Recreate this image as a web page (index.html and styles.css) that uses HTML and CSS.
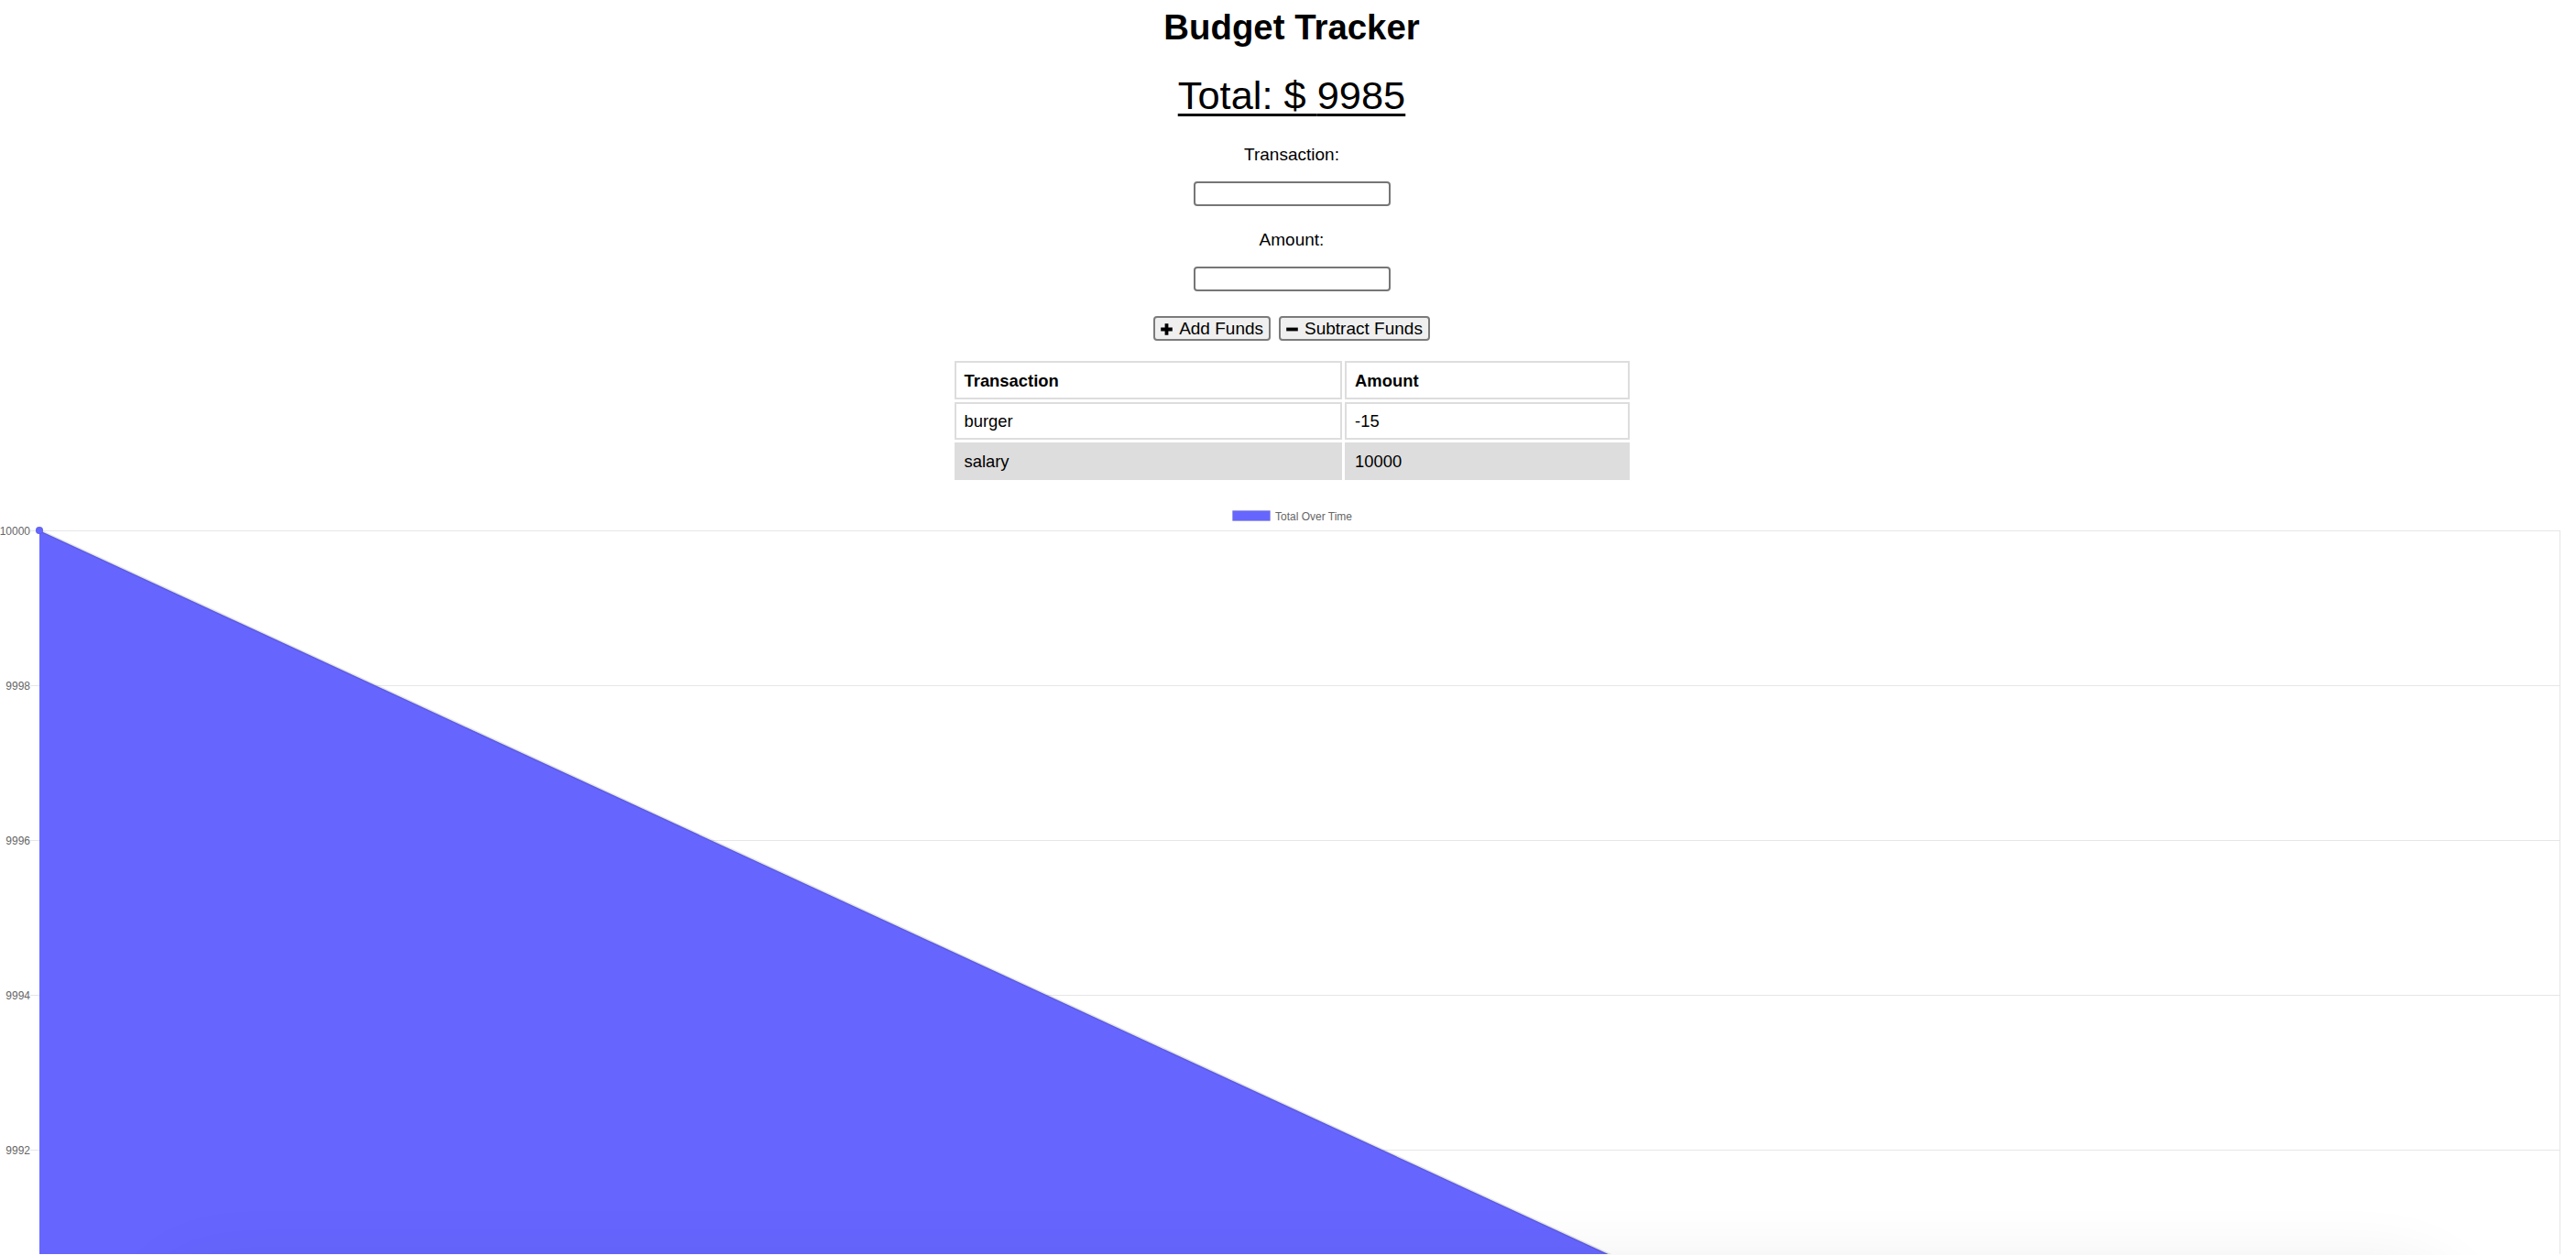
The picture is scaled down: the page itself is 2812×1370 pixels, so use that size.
FILE: index.html
```html
<!DOCTYPE html>
<html lang="en">
<head>
<meta charset="utf-8">
<title>Budget Tracker</title>
<link rel="stylesheet" href="styles.css">
</head>
<body>
<main class="page">
  <div class="top">
    <h1 class="title">Budget Tracker</h1>
    <h2 class="total">Total: $ <span class="total-value">9985</span></h2>
    <label class="label label-first" for="t-name">Transaction:</label>
    <input class="field" id="t-name" type="text">
    <label class="label label-second" for="t-amount">Amount:</label>
    <input class="field" id="t-amount" type="number">
    <div class="actions">
      <button class="btn" type="button"><svg class="ico" viewBox="0 0 13 13" aria-hidden="true"><path d="M4.6 0.2h3.8v4.4h4.4v3.8H8.4v4.4H4.6V8.4H0.2V4.6h4.4z"/></svg><span>Add Funds</span></button>
      <button class="btn" type="button"><svg class="ico" viewBox="0 0 13 13" aria-hidden="true"><path d="M0.2 4.6h12.6v3.8H0.2z"/></svg><span>Subtract Funds</span></button>
    </div>
    <table class="ledger">
      <colgroup><col class="col-a"><col class="col-b"></colgroup>
      <thead>
        <tr><th>Transaction</th><th>Amount</th></tr>
      </thead>
      <tbody>
        <tr><td>burger</td><td>-15</td></tr>
        <tr class="alt"><td>salary</td><td>10000</td></tr>
      </tbody>
    </table>
  </div>
  <svg class="chart" viewBox="0 0 2812 830" width="2812" height="830">
    <rect x="1345.5" y="18.5" width="41" height="11" fill="#6666ff" stroke="rgba(0,0,0,0.1)" stroke-width="1"/>
    <text class="legend-text" x="1392" y="28.5">Total Over Time</text>
    <g stroke="#e6e6e6" stroke-width="1">
      <line x1="33" y1="40.5" x2="2794" y2="40.5"/>
      <line x1="33" y1="209.5" x2="2794" y2="209.5"/>
      <line x1="33" y1="378.5" x2="2794" y2="378.5"/>
      <line x1="33" y1="547.5" x2="2794" y2="547.5"/>
      <line x1="33" y1="716.5" x2="2794" y2="716.5"/>
      <line x1="2794.5" y1="40" x2="2794.5" y2="830"/>
      <line x1="43.5" y1="40" x2="43.5" y2="830"/>
    </g>
    <g class="tick">
      <text x="33" y="44.5">10000</text>
      <text x="33" y="213.5">9998</text>
      <text x="33" y="382.5">9996</text>
      <text x="33" y="551.5">9994</text>
      <text x="33" y="720.5">9992</text>
    </g>
    <polygon points="43,40 2794,1309 2794,1400 43,1400" fill="#6666ff"/>
    <line x1="43" y1="40" x2="2794" y2="1309" stroke="rgba(0,0,0,0.1)" stroke-width="3"/>
    <circle cx="43" cy="40" r="4" fill="#6666ff" stroke="rgba(0,0,0,0.08)" stroke-width="1"/>
  </svg>
  <div class="glow" aria-hidden="true"></div>
</main>
</body>
</html>
```
FILE: styles.css
```css
html, body {
  margin: 0;
  padding: 0;
  overflow: hidden;
  background: #ffffff;
}

body {
  font-family: "Liberation Sans", Arial, Helvetica, sans-serif;
  color: #000000;
}

.page {
  position: relative;
  width: 2812px;
  height: 1370px;
  overflow: hidden;
}

.top {
  display: flex;
  flex-direction: column;
  align-items: center;
  padding-left: 8px;
}

.title {
  margin: 9px 0 0;
  font-size: 38.4px;
  line-height: 42px;
  font-weight: bold;
}

.total {
  margin: 29px 0 0;
  font-size: 43.4px;
  line-height: 48px;
  font-weight: normal;
  text-decoration: underline;
  text-decoration-thickness: 3px;
  text-underline-offset: 5px;
}

.label {
  display: block;
  font-size: 19px;
  line-height: 22px;
}

.label-first {
  margin-top: 30px;
}

.label-second {
  margin-top: 26px;
}

.field {
  display: block;
  box-sizing: border-box;
  margin: 18px 0 0;
  width: 215px;
  height: 27px;
  border: 2px solid #767676;
  border-radius: 4px;
  background: #ffffff;
  padding: 0 4px;
  font-family: inherit;
  font-size: 15px;
}

.actions {
  display: flex;
  gap: 9px;
  margin-top: 27px;
}

.btn {
  display: flex;
  align-items: center;
  box-sizing: border-box;
  height: 27px;
  margin: 0;
  padding: 0 6px;
  border: 2px solid #7b7b7b;
  border-radius: 4px;
  background: #efefef;
  font-family: inherit;
  font-size: 19px;
  line-height: 22px;
  color: #000000;
  gap: 7px;
}

.ico {
  width: 13px;
  height: 13px;
  fill: #000000;
  flex: none;
  margin-top: 2px;
}

.ledger {
  margin-top: 19px;
  border-collapse: separate;
  border-spacing: 3px;
  table-layout: fixed;
  width: 743px;
  font-size: 18.4px;
  text-align: left;
}

.col-a {
  width: 423px;
}

.col-b {
  width: 310px;
}

.ledger th,
.ledger td {
  border: 2px solid #dddddd;
  padding: 8px 9px;
  line-height: 21px;
}

.ledger th {
  font-weight: bold;
  padding-top: 9px;
}

.ledger .alt td {
  background: #dddddd;
}

.chart {
  display: block;
  margin-top: 12px;
}

.legend-text {
  font-family: "Liberation Sans", Arial, Helvetica, sans-serif;
  font-size: 12px;
  fill: #666666;
}

.tick text {
  font-family: "Liberation Sans", Arial, Helvetica, sans-serif;
  font-size: 12px;
  fill: #666666;
  text-anchor: end;
}

.glow {
  position: absolute;
  left: 170px;
  right: 130px;
  top: 1390px;
  height: 200px;
  border-radius: 80px;
  box-shadow: 0 0 70px 14px rgba(0, 0, 0, 0.07);
  pointer-events: none;
}
```
